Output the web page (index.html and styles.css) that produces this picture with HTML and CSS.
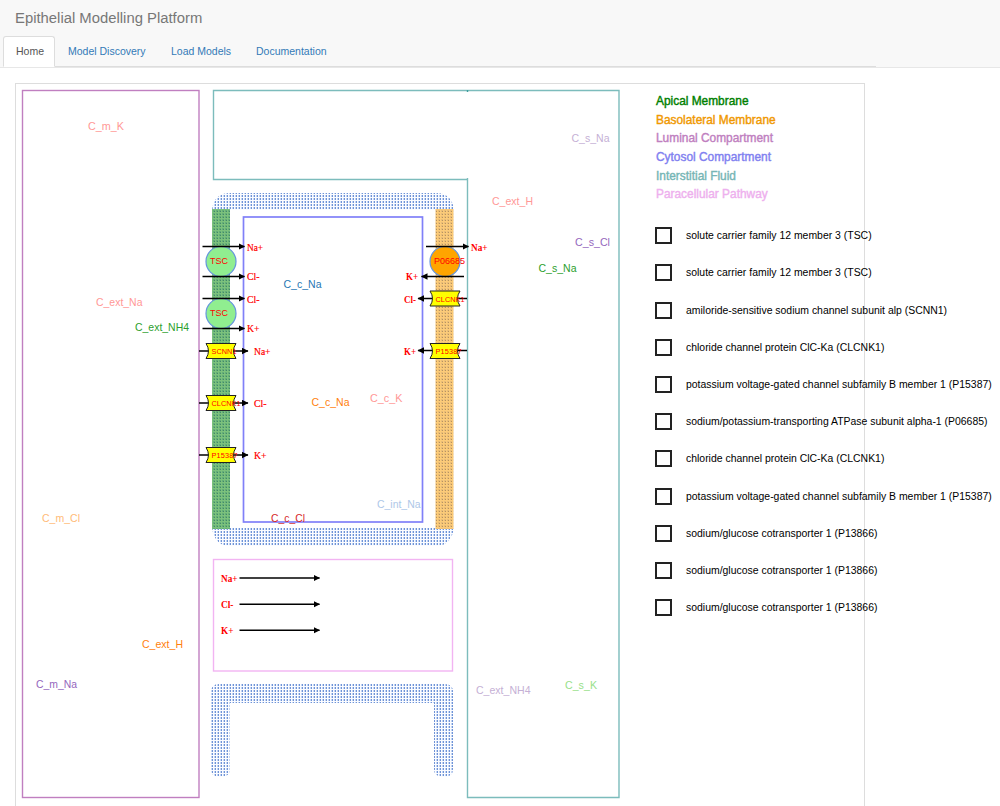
FILE: index.html
```
<!DOCTYPE html>
<html lang="en">
<head>
<meta charset="utf-8">
<title>Epithelial Modelling Platform</title>
<link rel="stylesheet" href="styles.css">
</head>
<body>
<header class="header">
  <div class="brand">Epithelial Modelling Platform</div>
  <nav class="tabs">
    <a class="tab active">Home</a>
    <a class="tab t2">Model Discovery</a>
    <a class="tab t3">Load Models</a>
    <a class="tab t4">Documentation</a>
  </nav>
</header>
<main class="panel">
  <svg class="diagram" viewBox="16 84 624 722" width="624" height="722">
    <defs>
      <pattern id="dots" x="1" width="3" height="3" patternUnits="userSpaceOnUse">
        <rect width="3" height="3" fill="#fbfcff"/>
        <rect width="2" height="2" fill="#c3d5f3"/>
        <rect x="1" width="1" height="2" fill="#6f93d6"/>
      </pattern>
      <pattern id="green" width="3" height="3" patternUnits="userSpaceOnUse">
        <rect width="3" height="3" fill="#7cc17c"/>
        <rect width="2" height="2" fill="#64ae78"/>
        <rect x="1" y="1" width="1" height="1" fill="#43896a"/>
      </pattern>
      <pattern id="orange" width="3" height="3" patternUnits="userSpaceOnUse">
        <rect width="3" height="3" fill="#fccb78"/>
        <rect width="2" height="2" fill="#e9bd78"/>
        <rect x="1" y="1" width="1" height="1" fill="#b6925f"/>
      </pattern>
      <marker id="head" markerUnits="userSpaceOnUse" markerWidth="7" markerHeight="7" refX="6" refY="3.500" orient="auto"><path d="M0 0.300L6.500 3.500L0 6.700z"/></marker>
      <path id="channel" d="M0 0H30Q25 7.500 30 15H0Q5 7.500 0 0z"/>
    </defs>

    <g class="compartments">
      <rect x="22.500" y="90.500" width="176.500" height="707" stroke="#c07fc0"/>
      <path d="M467.500 90.500H213.500V179.500H467.500" stroke="#7cbcbc"/>
      <path d="M467.500 178V797.500H619V90.500H467.500" stroke="#7cbcbc"/>
      <path d="M467.500 90v2" stroke="#3f9f9f"/>
      <rect x="213.500" y="559.500" width="239" height="111.500" stroke="#f2b4f2"/>
    </g>

    <path fill="url(#dots)" d="M212 210Q214 193 230 193H436Q452 193 454 210z"/>
    <path fill="url(#dots)" d="M212 528H454Q451 546 436 546H230Q215 546 212 528z"/>
    <path fill="url(#dots)" d="M211 692Q211 684 219 684H445Q453 684 453 692V769Q453 777 444 777Q434 777 434 769V703H230V769Q230 777 220 777Q211 777 211 769z"/>
    <rect x="212" y="209" width="18" height="320" fill="url(#green)"/>
    <rect x="435.500" y="209" width="18" height="320" fill="url(#orange)"/>
    <rect class="cytosol" x="243.500" y="217" width="179" height="305"/>

    <g class="circles">
      <circle cx="221" cy="261.500" r="15" fill="#90ee90"/>
      <circle cx="221" cy="313.500" r="15" fill="#90ee90"/>
      <circle cx="445" cy="261.500" r="15" fill="orange"/>
    </g>
    <g class="arrows">
      <path d="M202.500 246.500H244.500"/><path d="M202.500 276.500H244.500"/>
      <path d="M202.500 298.500H244.500"/><path d="M202.500 328.500H244.500"/>
      <path d="M426 246.500H468.500"/><path d="M464 276.500H421.500"/>
      <path d="M199 351H248"/><path d="M199 403H248"/><path d="M199 455H248"/>
      <path d="M467 298.500H418"/><path d="M467 350.500H418"/>
      <path d="M239.500 578H319.500"/><path d="M239.500 604.200H319.500"/><path d="M239.500 630.300H319.500"/>
    </g>
    <g class="channels">
      <use href="#channel" x="206" y="343.500"/><use href="#channel" x="206" y="395.500"/><use href="#channel" x="206" y="447.500"/>
      <use href="#channel" x="430" y="291"/><use href="#channel" x="430" y="343.500"/>
    </g>

    <g class="node">
      <text x="210" y="264" textLength="18">TSC</text>
      <text x="210" y="316" textLength="18">TSC</text>
      <text x="434" y="264" textLength="31">P06685</text>
    </g>
    <g class="node small">
      <text x="211.500" y="354" textLength="25">SCNN1</text>
      <text x="211.500" y="406" textLength="29">CLCNK1</text>
      <text x="211.500" y="458" textLength="26">P15387</text>
      <text x="435.500" y="302" textLength="29">CLCNK1</text>
      <text x="435.500" y="354" textLength="26">P15387</text>
    </g>
    <g class="ion">
      <g class="light">
        <text x="247" y="251" textLength="16" lengthAdjust="spacingAndGlyphs">Na+</text>
        <text x="247" y="280" textLength="12.500" lengthAdjust="spacingAndGlyphs">Cl-</text>
        <text x="247" y="303" textLength="12.500" lengthAdjust="spacingAndGlyphs">Cl-</text>
        <text x="247" y="332" textLength="12.500" lengthAdjust="spacingAndGlyphs">K+</text>
        <text x="254" y="355" textLength="16.500" lengthAdjust="spacingAndGlyphs">Na+</text>
        <text x="254" y="407" textLength="12.500" lengthAdjust="spacingAndGlyphs">Cl-</text>
        <text x="254" y="459" textLength="12.500" lengthAdjust="spacingAndGlyphs">K+</text>
      </g>
      <text x="471" y="251" textLength="16.500" lengthAdjust="spacingAndGlyphs">Na+</text>
      <text x="406" y="280" textLength="12" lengthAdjust="spacingAndGlyphs">K+</text>
      <text x="404" y="303" textLength="12" lengthAdjust="spacingAndGlyphs">Cl-</text>
      <text x="404" y="355" textLength="12" lengthAdjust="spacingAndGlyphs">K+</text>
      <text x="221" y="582" textLength="16.500" lengthAdjust="spacingAndGlyphs">Na+</text>
      <text x="221" y="608" textLength="12.500" lengthAdjust="spacingAndGlyphs">Cl-</text>
      <text x="221" y="634" textLength="12.500" lengthAdjust="spacingAndGlyphs">K+</text>
    </g>
    <g class="solute">
      <text x="88" y="130" textLength="36" lengthAdjust="spacingAndGlyphs" fill="#ff9896">C_m_K</text>
      <text x="96" y="305.500" textLength="46.500" lengthAdjust="spacingAndGlyphs" fill="#ff9896">C_ext_Na</text>
      <text x="135" y="330.500" textLength="54" lengthAdjust="spacingAndGlyphs" fill="#2ca02c">C_ext_NH4</text>
      <text x="42" y="521.500" textLength="38" lengthAdjust="spacingAndGlyphs" fill="#ffbb78">C_m_Cl</text>
      <text x="142" y="648" textLength="41" lengthAdjust="spacingAndGlyphs" fill="#ff7f0e">C_ext_H</text>
      <text x="36" y="688" textLength="41" lengthAdjust="spacingAndGlyphs" fill="#9467bd">C_m_Na</text>
      <text x="571.500" y="142" textLength="38" lengthAdjust="spacingAndGlyphs" fill="#c5b0d5">C_s_Na</text>
      <text x="492" y="204.500" textLength="41" lengthAdjust="spacingAndGlyphs" fill="#ff9896">C_ext_H</text>
      <text x="575" y="246" textLength="35" lengthAdjust="spacingAndGlyphs" fill="#9467bd">C_s_Cl</text>
      <text x="538.500" y="272" textLength="38" lengthAdjust="spacingAndGlyphs" fill="#2ca02c">C_s_Na</text>
      <text x="283.500" y="288" textLength="38" lengthAdjust="spacingAndGlyphs" fill="#1f77b4">C_c_Na</text>
      <text x="311.500" y="405.500" textLength="38" lengthAdjust="spacingAndGlyphs" fill="#ff7f0e">C_c_Na</text>
      <text x="370" y="402" textLength="32.500" lengthAdjust="spacingAndGlyphs" fill="#ff9896">C_c_K</text>
      <text x="377" y="508" textLength="43.500" lengthAdjust="spacingAndGlyphs" fill="#aec7e8">C_int_Na</text>
      <text x="271" y="521.500" textLength="34" lengthAdjust="spacingAndGlyphs" fill="#d62728">C_c_Cl</text>
      <text x="476" y="693.500" textLength="54.500" lengthAdjust="spacingAndGlyphs" fill="#c5b0d5">C_ext_NH4</text>
      <text x="565" y="689" textLength="32" lengthAdjust="spacingAndGlyphs" fill="#98df8a">C_s_K</text>
    </g>
  </svg>
  <section class="side">
    <ul class="legend">
      <li class="apical">Apical Membrane</li>
      <li class="baso">Basolateral Membrane</li>
      <li class="luminal">Luminal Compartment</li>
      <li class="cyto">Cytosol Compartment</li>
      <li class="fluid">Interstitial Fluid</li>
      <li class="para">Paracellular Pathway</li>
    </ul>
    <ul class="options">
      <li><i class="box"></i>solute carrier family 12 member 3 (TSC)</li>
      <li><i class="box"></i>solute carrier family 12 member 3 (TSC)</li>
      <li><i class="box"></i>amiloride-sensitive sodium channel subunit alp (SCNN1)</li>
      <li><i class="box"></i>chloride channel protein ClC-Ka (CLCNK1)</li>
      <li><i class="box"></i>potassium voltage-gated channel subfamily B member 1 (P15387)</li>
      <li><i class="box"></i>sodium/potassium-transporting ATPase subunit alpha-1 (P06685)</li>
      <li><i class="box"></i>chloride channel protein ClC-Ka (CLCNK1)</li>
      <li><i class="box"></i>potassium voltage-gated channel subfamily B member 1 (P15387)</li>
      <li><i class="box"></i>sodium/glucose cotransporter 1 (P13866)</li>
      <li><i class="box"></i>sodium/glucose cotransporter 1 (P13866)</li>
      <li><i class="box"></i>sodium/glucose cotransporter 1 (P13866)</li>
    </ul>
  </section>
</main>
</body>
</html>
```
FILE: styles.css
```
* { box-sizing: border-box; }
body { margin: 0; height: 806px; overflow: hidden; background: #fff; font-family: "Liberation Sans", Arial, sans-serif; }
.header { height: 68px; background: #f8f8f8; border-bottom: 1px solid #e7e7e7; }
.brand { height: 36px; padding-left: 15px; font-size: 14.85px; line-height: 37px; color: #777; }
.tabs { display: flex; width: 873px; height: 31px; margin-left: 3px; border-bottom: 1px solid #ddd; }
.tab { height: 31px; padding-left: 12px; font-size: 10.5px; line-height: 30px; color: #337ab7; white-space: nowrap; }
.tab.active { width: 52px; border: 1px solid #ddd; border-bottom-color: #fff; border-radius: 3px 3px 0 0; background: #fff; color: #555; line-height: 28px; }
.t2 { width: 103px; padding-left: 13px; }
.t3 { width: 85px; padding-left: 13px; }
.t4 { padding-left: 13px; }
.panel { display: flex; width: 850px; height: 723px; margin: 15px 0 0 15px; border: 1px solid #ddd; border-bottom: 0; }
.diagram { display: block; flex: none; }
.compartments { fill: none; stroke-width: 1.4; }
.cytosol { fill: none; stroke: #8080f8; stroke-width: 1.7; }
.circles { stroke: #6495dd; stroke-width: 1.2; }
.arrows { fill: none; stroke: #000; stroke-width: 1.6; }
.arrows path { marker-end: url(#head); }
.channels { fill: #ff0; stroke: #222; stroke-width: 1; }
.node { fill: #f00; font-size: 9px; }
.small { font-size: 7.3px; }
.ion { fill: #f00; font: bold 9.5px "Liberation Serif", serif; }
.light { font-weight: normal; stroke: #f00; stroke-width: 0.2px; }
.solute { font-size: 11.3px; }
.side { flex: none; padding: 8px 0 0 16px; white-space: nowrap; }
.legend, .options { margin: 0; padding: 0; list-style: none; }
.legend li { height: 18.7px; line-height: 19px; font-size: 11.9px; -webkit-text-stroke: 0.4px currentColor; }
.apical { color: green; }
.baso { color: #f09800; }
.luminal { color: #bf80bf; }
.cyto { color: #8080f0; }
.fluid { color: #76b5b5; }
.para { color: #eeb0ee; }
.options { padding-top: 13px; }
.options li { display: flex; align-items: center; gap: 14px; height: 37.2px; font-size: 10.45px; color: #000; }
.box { width: 17px; height: 17px; margin-left: -1px; border: 2px solid #222; background: #fff; }
```
